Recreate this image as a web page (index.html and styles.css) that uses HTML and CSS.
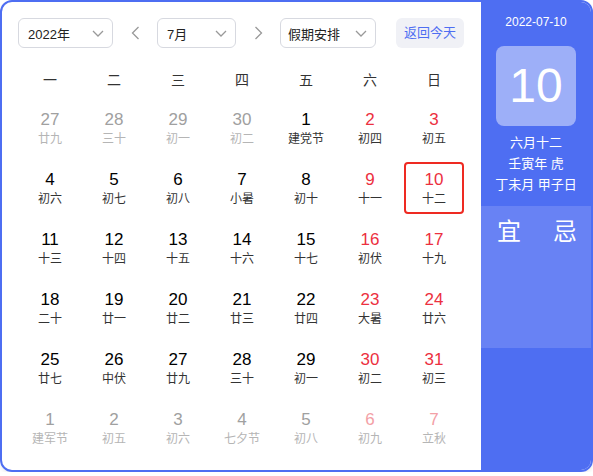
FILE: index.html
```html
<!DOCTYPE html>
<html lang="zh-CN">
<head>
  <meta charset="UTF-8">
  <meta name="viewport" content="width=device-width, initial-scale=1.0">
  <title>万年历</title>
  <link rel="stylesheet" href="styles.css">
</head>
<body>
  <div class="calendar">
    <div class="main">
      <div class="toolbar">
        <div class="select select-year">
          <span>2022年</span>
          <svg class="chevron" viewBox="0 0 12 7"><polyline points="1,1 6,6 11,1"/></svg>
        </div>
        <div class="nav">
          <svg viewBox="0 0 8 14"><polyline points="7,1 1,7 7,13"/></svg>
        </div>
        <div class="select select-month">
          <span>7月</span>
          <svg class="chevron" viewBox="0 0 12 7"><polyline points="1,1 6,6 11,1"/></svg>
        </div>
        <div class="nav">
          <svg viewBox="0 0 8 14"><polyline points="1,1 7,7 1,13"/></svg>
        </div>
        <div class="select select-holiday">
          <span>假期安排</span>
          <svg class="chevron" viewBox="0 0 12 7"><polyline points="1,1 6,6 11,1"/></svg>
        </div>
        <div class="today">返回今天</div>
      </div>

      <div class="weekdays">
        <span>一</span><span>二</span><span>三</span><span>四</span><span>五</span><span>六</span><span>日</span>
      </div>

      <div class="grid">
        <div class="day other"><span class="num">27</span><span class="lunar">廿九</span></div>
        <div class="day other"><span class="num">28</span><span class="lunar">三十</span></div>
        <div class="day other"><span class="num">29</span><span class="lunar">初一</span></div>
        <div class="day other"><span class="num">30</span><span class="lunar">初二</span></div>
        <div class="day"><span class="num">1</span><span class="lunar">建党节</span></div>
        <div class="day weekend"><span class="num">2</span><span class="lunar">初四</span></div>
        <div class="day weekend"><span class="num">3</span><span class="lunar">初五</span></div>

        <div class="day"><span class="num">4</span><span class="lunar">初六</span></div>
        <div class="day"><span class="num">5</span><span class="lunar">初七</span></div>
        <div class="day"><span class="num">6</span><span class="lunar">初八</span></div>
        <div class="day"><span class="num">7</span><span class="lunar">小暑</span></div>
        <div class="day"><span class="num">8</span><span class="lunar">初十</span></div>
        <div class="day weekend"><span class="num">9</span><span class="lunar">十一</span></div>
        <div class="day weekend selected"><span class="num">10</span><span class="lunar">十二</span></div>

        <div class="day"><span class="num">11</span><span class="lunar">十三</span></div>
        <div class="day"><span class="num">12</span><span class="lunar">十四</span></div>
        <div class="day"><span class="num">13</span><span class="lunar">十五</span></div>
        <div class="day"><span class="num">14</span><span class="lunar">十六</span></div>
        <div class="day"><span class="num">15</span><span class="lunar">十七</span></div>
        <div class="day weekend"><span class="num">16</span><span class="lunar">初伏</span></div>
        <div class="day weekend"><span class="num">17</span><span class="lunar">十九</span></div>

        <div class="day"><span class="num">18</span><span class="lunar">二十</span></div>
        <div class="day"><span class="num">19</span><span class="lunar">廿一</span></div>
        <div class="day"><span class="num">20</span><span class="lunar">廿二</span></div>
        <div class="day"><span class="num">21</span><span class="lunar">廿三</span></div>
        <div class="day"><span class="num">22</span><span class="lunar">廿四</span></div>
        <div class="day weekend"><span class="num">23</span><span class="lunar">大暑</span></div>
        <div class="day weekend"><span class="num">24</span><span class="lunar">廿六</span></div>

        <div class="day"><span class="num">25</span><span class="lunar">廿七</span></div>
        <div class="day"><span class="num">26</span><span class="lunar">中伏</span></div>
        <div class="day"><span class="num">27</span><span class="lunar">廿九</span></div>
        <div class="day"><span class="num">28</span><span class="lunar">三十</span></div>
        <div class="day"><span class="num">29</span><span class="lunar">初一</span></div>
        <div class="day weekend"><span class="num">30</span><span class="lunar">初二</span></div>
        <div class="day weekend"><span class="num">31</span><span class="lunar">初三</span></div>

        <div class="day other"><span class="num">1</span><span class="lunar">建军节</span></div>
        <div class="day other"><span class="num">2</span><span class="lunar">初五</span></div>
        <div class="day other"><span class="num">3</span><span class="lunar">初六</span></div>
        <div class="day other"><span class="num">4</span><span class="lunar">七夕节</span></div>
        <div class="day other"><span class="num">5</span><span class="lunar">初八</span></div>
        <div class="day other weekend"><span class="num">6</span><span class="lunar">初九</span></div>
        <div class="day other weekend"><span class="num">7</span><span class="lunar">立秋</span></div>
      </div>
    </div>

    <div class="side">
      <div class="side-date">2022-07-10</div>
      <div class="side-day">10</div>
      <div class="side-lunar">
        <div>六月十二</div>
        <div>壬寅年 虎</div>
        <div>丁未月 甲子日</div>
      </div>
      <div class="yiji">
        <span>宜</span>
        <span>忌</span>
      </div>
    </div>
  </div>
</body>
</html>
```

FILE: styles.css
```css
body {
  margin: 0;
  background-color: #fff;
  font-family: "Liberation Sans", "Noto Sans CJK SC", sans-serif;
  color: #333;
}

.calendar {
  display: flex;
  width: 593px;
  height: 472px;
  box-sizing: border-box;
  border: 2px solid #4e6ef2;
  border-radius: 12px;
  overflow: hidden;
  box-shadow: 0 2px 4px rgba(0, 0, 0, 0.08);
}

.main {
  flex: 1;
  padding: 16px 0 0 16px;
}

/* toolbar */
.toolbar { display: flex; align-items: center; height: 30px; }
.select {
  display: flex;
  align-items: center;
  justify-content: space-between;
  height: 30px;
  padding: 0 8px 0 9px;
  box-sizing: border-box;
  border: 1px solid #d7d9e0;
  border-radius: 6px;
  font-size: 13px;
  color: #222;
}
.select-year { width: 95px; }
.select-month { width: 79px; }
.select-holiday { width: 96px; padding-left: 7px; }
.chevron { width: 12px; height: 7px; }
.chevron polyline, .nav polyline {
  fill: none;
  stroke: #999;
  stroke-width: 1.3;
}
.nav {
  width: 44px;
  display: flex;
  justify-content: center;
}
.nav svg { width: 9px; height: 14px; }
.today {
  margin-left: 20px;
  height: 30px;
  line-height: 30px;
  padding: 0 8px;
  border-radius: 6px;
  background-color: #f0f1f6;
  color: #4e6ef2;
  font-size: 13px;
}

/* week header */
.weekdays {
  display: grid;
  grid-template-columns: repeat(7, 60px);
  column-gap: 4px;
  margin: 22px 0 0 2px;
  height: 20px;
  line-height: 20px;
  font-size: 14px;
  text-align: center;
  color: #333;
}

/* days */
.grid {
  display: grid;
  grid-template-columns: repeat(7, 60px);
  grid-auto-rows: 52px;
  column-gap: 4px;
  row-gap: 8px;
  margin: 12px 0 0 2px;
}
.day {
  display: flex;
  flex-direction: column;
  align-items: center;
  justify-content: center;
  box-sizing: border-box;
  border-radius: 4px;
}
.num { font-size: 17px; line-height: 22px; color: #000; }
.lunar { font-size: 12px; line-height: 16px; color: #333; }
.weekend .num { color: #ec3040; }
.other .num { color: #a0a0a0; }
.other .lunar { color: #b5b5b5; }
.other.weekend .num { color: #f3a0a6; }
.selected { border: 2px solid #ee2a22; }

/* side panel */
.side {
  width: 110px;
  background-color: #4e6ef2;
  color: #fff;
  text-align: center;
}
.side-date { margin-top: 10px; font-size: 12px; line-height: 20px; }
.side-day {
  width: 80px;
  height: 80px;
  margin: 14px auto 0;
  border-radius: 8px;
  background-color: rgba(255, 255, 255, 0.45);
  font-size: 48px;
  line-height: 80px;
}
.side-lunar { margin-top: 6px; font-size: 13px; line-height: 21px; }
.yiji {
  display: flex;
  justify-content: space-between;
  height: 142px;
  margin-top: 11px;
  padding: 10px 14px 0 16px;
  box-sizing: border-box;
  background-color: #6882f4;
  font-size: 24px;
  line-height: 32px;
}
```
